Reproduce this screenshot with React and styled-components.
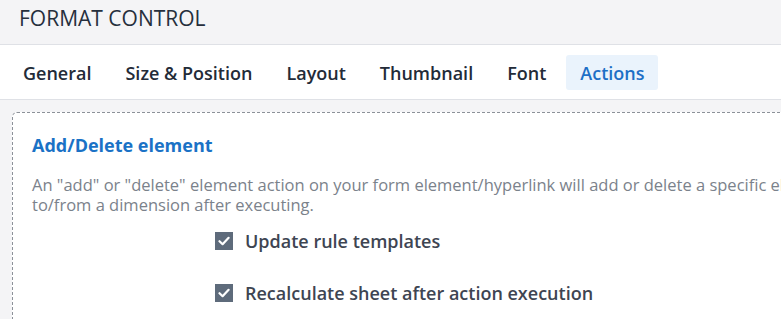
import React from 'react';
import styled, {createGlobalStyle, css} from 'styled-components';

const Global = createGlobalStyle`
    html, body {
        margin:0;
        padding:0;
        background:#f4f4f6;
        font-family:'Open Sans', 'Noto Sans', sans-serif;
    }
`;

const tabs = ['General', 'Size & Position', 'Layout', 'Thumbnail', 'Font', 'Actions'];

const options = ['Update rule templates', 'Recalculate sheet after action execution'];

const Check = () => (
    <Box>
        <svg width="12" height="10" viewBox="0 0 12 10">
            <path d="M1.5 5.2 L4.6 8.2 L10.6 1.8" fill="none" stroke="#fff" strokeWidth="2.2" strokeLinecap="round" strokeLinejoin="round"/>
        </svg>
    </Box>
);

const App = () => {
    return (
        <>
        <Global/>
        <Page>
            <Header>FORMAT CONTROL</Header>
            <Tabbar>
                {tabs.map(t => (
                    <Tab key={t} active={t === 'Actions'}>{t}</Tab>
                ))}
            </Tabbar>
            <Body>
                <Panel>
                    <Title>Add/Delete element</Title>
                    <Desc>
                        An "add" or "delete" element action on your form element/hyperlink will add or delete a specific element to/from a dimension after executing.
                    </Desc>
                    <Options>
                        {options.map(o => (
                            <Option key={o}><Check/>{o}</Option>
                        ))}
                    </Options>
                </Panel>
            </Body>
        </Page>
        </>
    )
}

const Page = styled.div`
    width:781px;
    height:319px;
    overflow:hidden;
    background:#f4f4f6;
`;

const Header = styled.div`
    height:45px;
    box-sizing:border-box;
    padding:4px 0 0 19px;
    font-size:21px;
    color:#262f3d;
    border-bottom:1px solid #dfe1e6;
    white-space:nowrap;
`;

const Tabbar = styled.div`
    display:flex;
    align-items:center;
    gap:6px;
    height:54px;
    padding-left:9px;
    background:#fff;
    border-bottom:1px solid #dfe1e6;
`;

const Tab = styled.div`
    height:35px;
    line-height:37px;
    padding:0 14px;
    border-radius:3px;
    font-size:18px;
    font-weight:600;
    color:#232b38;
    white-space:nowrap;
    margin-top:1px;
    ${({active}) => active && css`
        background:#eaf3fc;
        color:#1d6fc6;
    `};
`;

const Body = styled.div`
    padding:12px 0 0 12px;
`;

const Panel = styled.div`
    width:900px;
    height:260px;
    box-sizing:border-box;
    border:1px dashed #8c9199;
    border-radius:5px;
    background:#fff;
    padding:19px 0 0 19px;
`;

const Title = styled.div`
    font-size:18px;
    font-weight:700;
    color:#1a72c6;
    line-height:26px;
`;

const Desc = styled.div`
    margin-top:17px;
    width:820px;
    font-size:16.5px;
    line-height:20px;
    color:#7b828b;
`;

const Options = styled.div`
    display:flex;
    flex-direction:column;
    gap:28px;
    margin-top:14px;
    padding-left:183px;
`;

const Option = styled.div`
    display:flex;
    align-items:center;
    gap:12px;
    height:24px;
    font-size:18px;
    font-weight:600;
    color:#3e4552;
    white-space:nowrap;
`;

const Box = styled.span`
    width:18px;
    height:18px;
    flex:none;
    background:#5e6b7b;
    display:flex;
    align-items:center;
    justify-content:center;
`;

export default App;
